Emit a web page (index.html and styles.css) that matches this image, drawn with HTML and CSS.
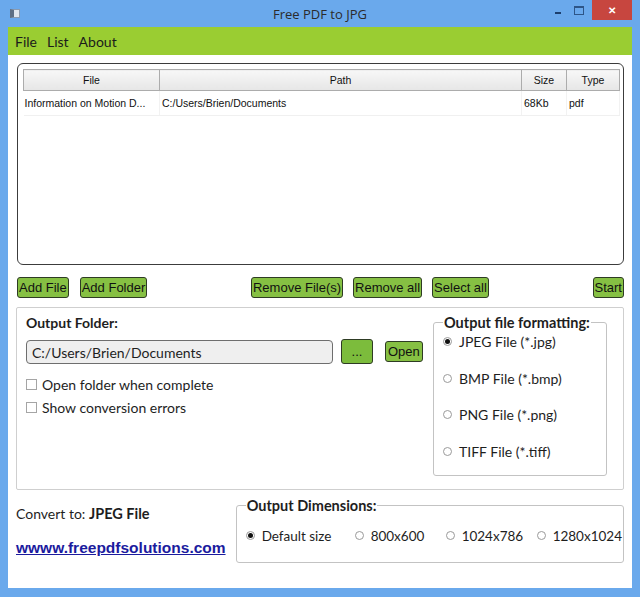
FILE: index.html
```html
<!DOCTYPE html>
<html lang="en">
<head>
    <meta charset="UTF-8">
    <title>Free PDF to JPG</title>
    <link rel="stylesheet" href="styles.css">
</head>
<body>

<div class="window">
    <div class="titlebar">
        <span class="app-icon"></span>
        <span class="title">Free PDF to JPG</span>
        <div class="controls">
            <span class="ctl-min"></span>
            <span class="ctl-max"></span>
            <span class="ctl-close">&#10005;</span>
        </div>
    </div>

    <div class="client">
        <div class="menubar">
            <span>File</span>
            <span>List</span>
            <span>About</span>
        </div>

        <div class="content">
            <div class="filelist">
                <table>
                    <thead>
                        <tr>
                            <th class="col-file">File</th>
                            <th class="col-path">Path</th>
                            <th class="col-size">Size</th>
                            <th class="col-type">Type</th>
                        </tr>
                    </thead>
                    <tbody>
                        <tr>
                            <td>Information on Motion D...</td>
                            <td>C:/Users/Brien/Documents</td>
                            <td>68Kb</td>
                            <td>pdf</td>
                        </tr>
                    </tbody>
                </table>
            </div>

            <div class="actions">
                <button class="btn">Add File</button>
                <button class="btn">Add Folder</button>
                <button class="btn push">Remove File(s)</button>
                <button class="btn">Remove all</button>
                <button class="btn">Select all</button>
                <button class="btn push">Start</button>
            </div>

            <div class="output-panel">
                <div class="folder-col">
                    <div class="label-bold">Output Folder:</div>
                    <div class="folder-row">
                        <div class="folder-input">C:/Users/Brien/Documents</div>
                        <button class="btn btn-dots">...</button>
                        <button class="btn btn-open">Open</button>
                    </div>
                    <label class="check"><span class="box"></span>Open folder when complete</label>
                    <label class="check"><span class="box"></span>Show conversion errors</label>
                </div>

                <fieldset class="format-box">
                    <legend>Output file formatting:</legend>
                    <label class="radio"><span class="dot on"></span>JPEG File (*.jpg)</label>
                    <label class="radio"><span class="dot"></span>BMP File (*.bmp)</label>
                    <label class="radio"><span class="dot"></span>PNG File (*.png)</label>
                    <label class="radio"><span class="dot"></span>TIFF File (*.tiff)</label>
                </fieldset>
            </div>

            <div class="footer">
                <div class="convert-col">
                    <div class="convert">Convert to: <b>JPEG File</b></div>
                    <a class="site-link" href="#">wwww.freepdfsolutions.com</a>
                </div>
                <fieldset class="dims-box">
                    <legend>Output Dimensions:</legend>
                    <label class="radio"><span class="dot on"></span>Default size</label>
                    <label class="radio"><span class="dot"></span>800x600</label>
                    <label class="radio"><span class="dot"></span>1024x786</label>
                    <label class="radio"><span class="dot"></span>1280x1024</label>
                </fieldset>
            </div>
        </div>
    </div>
</div>

</body>
</html>
```

FILE: styles.css
```css
body {
    margin: 0;
    font-family: Lato, "Open Sans", sans-serif;
    color: #1e1e1e;
}
.window {
    width: 640px;
    height: 597px;
    background-color: #6aa9ec;
    display: flex;
    flex-direction: column;
}
.titlebar {
    height: 27px;
    display: grid;
    grid-template-columns: 1fr auto 1fr;
    align-items: center;
}
.app-icon {
    width: 10px;
    height: 9px;
    margin-left: 10px;
    background: #dfe6ee;
    border: 1px solid #8a9bb0;
    box-sizing: border-box;
    border-left: 4px solid #5d6f85;
}
.title {
    font-family: "Open Sans", sans-serif;
    font-size: 13px;
    color: #2b2b2b;
}
.controls {
    justify-self: end;
    align-self: start;
    display: flex;
    align-items: flex-start;
    margin-right: 8px;
}
.ctl-min {
    width: 6px;
    height: 2px;
    background: #1c3f6e;
    margin-top: 12px;
    margin-right: 13px;
}
.ctl-max {
    width: 8px;
    height: 6px;
    border: 1px solid #2d5587;
    border-top-width: 2px;
    margin-top: 6px;
    margin-right: 8px;
}
.ctl-close {
    width: 40px;
    height: 20px;
    background: #c7463f;
    color: #fff;
    font-size: 10px;
    font-weight: bold;
    display: flex;
    align-items: center;
    justify-content: center;
}
.client {
    flex: 1;
    margin: 0 8px 9px 8px;
    background: #fff;
    display: flex;
    flex-direction: column;
}
.menubar {
    height: 28px;
    background-color: #9acd32;
    display: flex;
    align-items: center;
    gap: 10px;
    padding-left: 7px;
    font-size: 14px;
    color: #1b1b1b;
}
.content {
    padding: 8px 8px 0 9px;
}

/* lista de arquivos */
.filelist {
    height: 202px;
    box-sizing: border-box;
    border: 1px solid #3c3c3c;
    border-radius: 6px;
    padding: 5px 4px 0 5px;
}
.filelist table {
    width: 597px;
    border-collapse: collapse;
    font-family: "Liberation Sans", sans-serif;
    font-size: 10.5px;
    color: #111;
}
.filelist th {
    height: 20px;
    padding: 0;
    font-weight: normal;
    text-align: center;
    background: linear-gradient(#f7f7f7, #e6e6e6);
    border: 1px solid #acacac;
}
.col-file { width: 135px; }
.col-size { width: 44px; }
.col-type { width: 52px; }
.filelist td {
    height: 24px;
    padding: 0 0 0 2px;
    border-right: 1px solid #f2f2f2;
    border-bottom: 1px solid #f0f0f0;
}
.filelist td:first-child { padding-left: 1px; }

/* botoes */
.actions {
    display: flex;
    gap: 10px;
    margin-top: 12px;
}
.actions .push {
    margin-left: auto;
}
.btn {
    height: 21px;
    padding: 0 1px;
    font-family: "Liberation Sans", sans-serif;
    font-size: 13px;
    color: #111;
    background-color: #86c043;
    border: 1px solid #2e3b24;
    border-radius: 3px;
}
.actions .btn:nth-child(2) { margin-left: 1px; }

/* painel de saida */
.output-panel {
    margin-top: 9px;
    margin-left: -1px;
    height: 183px;
    box-sizing: border-box;
    border: 1px solid #cfcfcf;
    border-radius: 2px;
    display: flex;
    justify-content: space-between;
    padding: 0 16px 0 9px;
}
.folder-col {
    padding-top: 6px;
}
.label-bold {
    font-weight: bold;
    font-size: 14px;
}
.folder-row {
    display: flex;
    align-items: center;
    margin-top: 8px;
    margin-bottom: 9px;
}
.folder-input {
    width: 307px;
    height: 24px;
    box-sizing: border-box;
    background: #efefef;
    border: 1px solid #6e6e6e;
    border-radius: 4px;
    font-size: 14px;
    line-height: 23px;
    padding-left: 5px;
}
.btn-dots {
    width: 32px;
    height: 25px;
    margin-left: 8px;
    background-color: #7cbc3c;
}
.btn-open {
    margin-left: 12px;
    padding: 0 2px;
}
.check {
    display: flex;
    align-items: center;
    font-size: 14px;
    height: 23px;
}
.box {
    width: 11px;
    height: 11px;
    box-sizing: border-box;
    border: 1px solid #a5a5a5;
    margin-right: 5px;
}
fieldset {
    margin: 0;
    border: 1px solid #c3c3c3;
    border-radius: 3px;
}
legend {
    font-weight: bold;
    font-size: 14.5px;
    padding: 0 1px;
}
.format-box {
    margin-top: 6px;
    width: 174px;
    height: 162px;
    box-sizing: border-box;
    padding: 0 0 0 9px;
    display: flex;
    flex-direction: column;
}
.radio {
    display: flex;
    align-items: center;
    font-size: 14px;
    flex-shrink: 0;
}
.format-box .radio {
    height: 36.5px;
}
.format-box .radio:first-of-type {
    height: 20px;
    margin-bottom: 9px;
}
.dot {
    width: 9px;
    height: 9px;
    box-sizing: border-box;
    border: 1px solid #9a9a9a;
    border-radius: 50%;
    margin-right: 7px;
    position: relative;
    background: #fff;
    flex-shrink: 0;
}
.dot.on::after {
    content: "";
    position: absolute;
    left: 1px;
    top: 1px;
    width: 5px;
    height: 5px;
    border-radius: 50%;
    background: #111;
}

/* rodape */
.footer {
    display: flex;
    margin-top: 7px;
}
.convert-col {
    width: 220px;
    margin-left: -1px;
}
.convert {
    font-size: 14px;
    margin-top: 8px;
}
.convert b { font-size: 14.5px; }
.site-link {
    display: block;
    margin-top: 17px;
    font-family: "Liberation Sans", sans-serif;
    font-weight: bold;
    font-size: 15.5px;
    color: #1b1b9e;
}
.dims-box {
    width: 389px;
    height: 66px;
    box-sizing: border-box;
    padding: 0 0 5px 9px;
    display: flex;
    align-items: center;
}
.dims-box .radio { font-size: 13.5px; }
.dims-box .radio:nth-of-type(1) { width: 109px; }
.dims-box .radio:nth-of-type(2) { width: 91px; }
.dims-box .radio:nth-of-type(3) { width: 91px; }
```
